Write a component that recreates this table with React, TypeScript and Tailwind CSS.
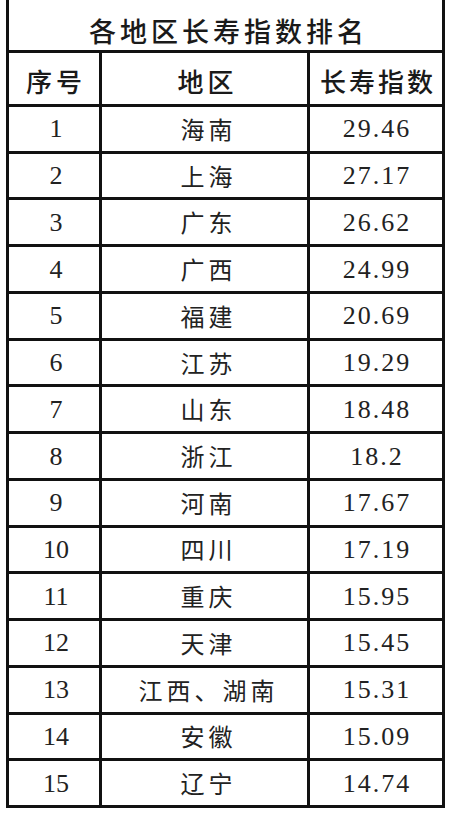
const rows: [number, string, string][] = [
  [1, "海南", "29.46"],
  [2, "上海", "27.17"],
  [3, "广东", "26.62"],
  [4, "广西", "24.99"],
  [5, "福建", "20.69"],
  [6, "江苏", "19.29"],
  [7, "山东", "18.48"],
  [8, "浙江", "18.2"],
  [9, "河南", "17.67"],
  [10, "四川", "17.19"],
  [11, "重庆", "15.95"],
  [12, "天津", "15.45"],
  [13, "江西、湖南", "15.31"],
  [14, "安徽", "15.09"],
  [15, "辽宁", "14.74"],
];

const cjk = "font-[family-name:'Noto_Sans_CJK_SC',sans-serif]";
const num = "font-[family-name:'Liberation_Serif','Times_New_Roman',serif]";

const App = () => {
  return (
    <div className="w-[450px] h-[814px] bg-white pl-[6px]">
      <div className="w-[439px] border-x-[3px] border-b-[3px] border-[#111] bg-[#111] flex flex-col gap-[3px]">
        <div
          className={`h-[50px] bg-white flex items-center justify-center pt-[12px] pl-[6px] text-[27px] tracking-[4px] text-[#1a1a1a] font-medium ${cjk}`}
        >
          各地区长寿指数排名
        </div>
        <div className="h-[51px] flex gap-[3px]">
          <div
            className={`w-[90px] bg-white flex items-center justify-center pt-[3px] pl-[4px] text-[26px] tracking-[4px] text-[#1a1a1a] font-medium ${cjk}`}
          >
            序号
          </div>
          <div
            className={`w-[205px] bg-white flex items-center justify-center pt-[3px] pl-[6px] text-[26px] tracking-[4px] text-[#1a1a1a] font-medium ${cjk}`}
          >
            地区
          </div>
          <div
            className={`flex-1 bg-white flex items-center justify-center pt-[3px] pl-[4px] text-[26px] tracking-[3px] text-[#1a1a1a] font-medium ${cjk}`}
          >
            长寿指数
          </div>
        </div>
        <div className="h-[698px] flex flex-col gap-[3px]">
          {rows.map(([n, region, value]) => (
            <div key={n} className="flex-1 flex gap-[3px]">
              <div
                className={`w-[90px] bg-white flex items-center justify-center pl-[4px] text-[26px] text-[#222] ${num}`}
              >
                {n}
              </div>
              <div
                className={`w-[205px] bg-white flex items-center justify-center pl-[8px] text-[24px] tracking-[4px] text-[#222] ${cjk}`}
              >
                {region}
              </div>
              <div
                className={`flex-1 bg-white flex items-center justify-center pl-[2px] text-[26px] tracking-[2px] text-[#222] ${num}`}
              >
                {value}
              </div>
            </div>
          ))}
        </div>
      </div>
    </div>
  );
};

export default App;
